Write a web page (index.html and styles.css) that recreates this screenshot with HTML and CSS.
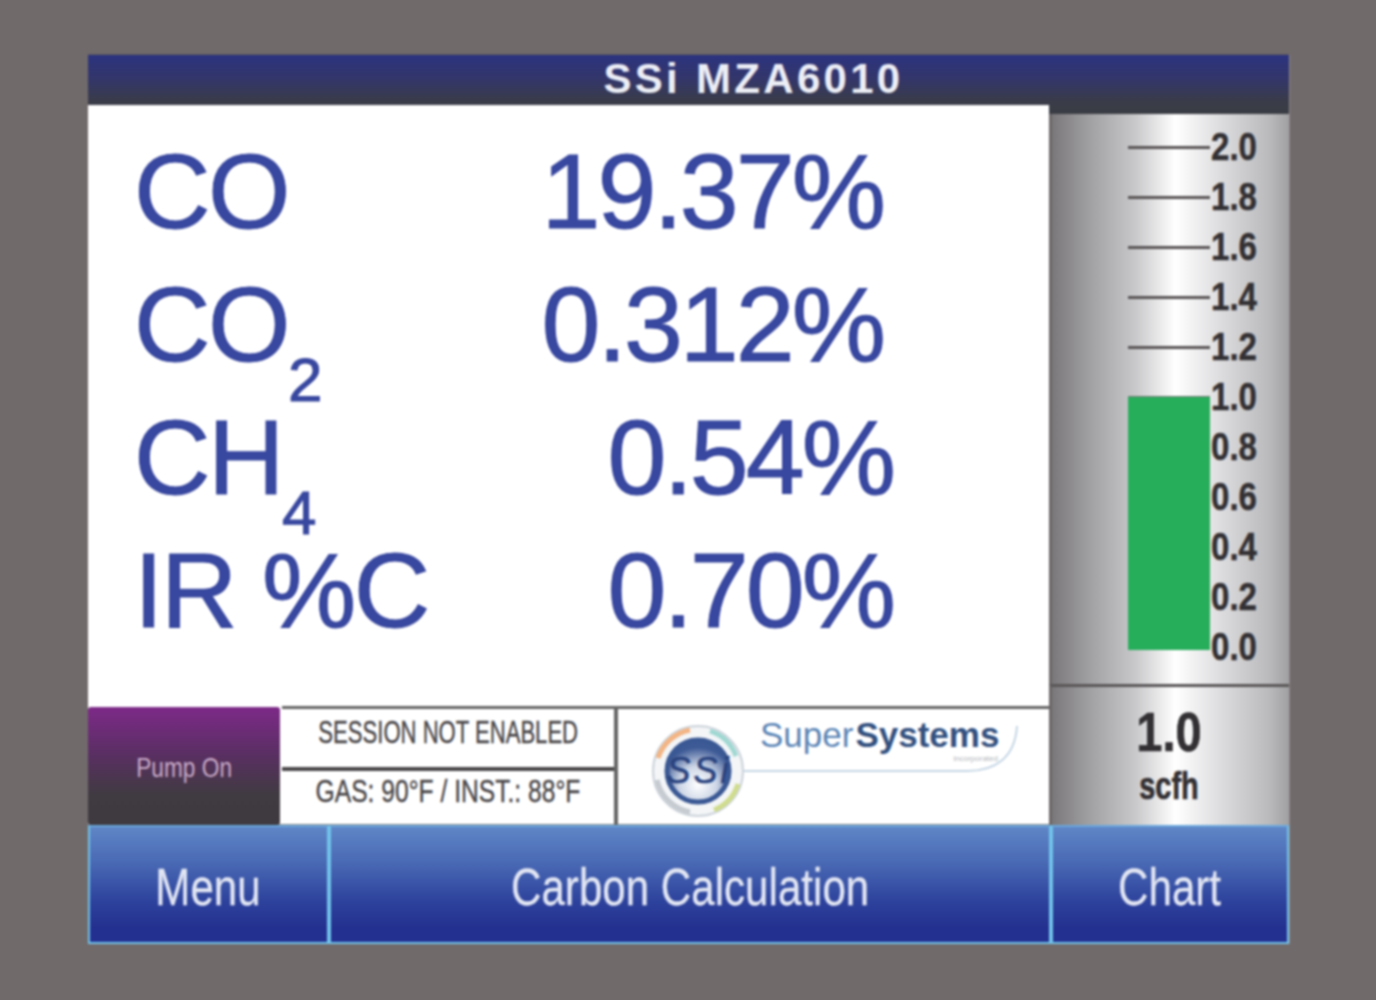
FILE: index.html
```html
<!DOCTYPE html>
<html lang="en">
<head>
<meta charset="utf-8">
<title>SSi MZA6010</title>
<link rel="stylesheet" href="styles.css">
</head>
<body>
<div class="screen">
  <header class="title"><span class="title-text">SSi MZA6010</span></header>
  <main class="readings">
    <div class="row"><div class="gas">CO</div><div class="value">19.37%</div></div>
    <div class="row"><div class="gas">CO<sub class="sub">2</sub></div><div class="value">0.312%</div></div>
    <div class="row"><div class="gas">CH<sub class="sub">4</sub></div><div class="value wide">0.54%</div></div>
    <div class="row"><div class="gas">IR %C</div><div class="value wide">0.70%</div></div>
  </main>
  <aside class="gauge">
    <div class="track">
      <div class="tick"></div><div class="tick"></div><div class="tick"></div><div class="tick"></div><div class="tick"></div>
      <div class="bar"></div>
    </div>
    <div class="scale">
      <div>2.0</div><div>1.8</div><div>1.6</div><div>1.4</div><div>1.2</div><div>1.0</div><div>0.8</div><div>0.6</div><div>0.4</div><div>0.2</div><div>0.0</div>
    </div>
  </aside>
  <div class="flow">
    <div class="flow-value">1.0</div>
    <div class="flow-unit">scfh</div>
  </div>
  <section class="status">
    <div class="pump"><span class="squeeze">Pump On</span></div>
    <div class="messages">
      <div class="message"><span class="squeeze-session">SESSION NOT ENABLED</span></div>
      <div class="message"><span class="squeeze-gas">GAS: 90°F / INST.: 88°F</span></div>
    </div>
    <div class="logo">
      <svg class="logo-art" viewBox="0 0 430 116" width="430" height="116">
        <path d="M123 63H349C377 63 397 50 399 18" fill="none" stroke="#c5d6e4" stroke-width="2"/>
        <circle cx="80" cy="63" r="45" fill="#f3f5f7" stroke="#cdd4dc" stroke-width="2"/>
        <path d="M40 50A42 42 0 0 1 72 22" fill="none" stroke="#f3b585" stroke-width="5"/>
        <path d="M92 23A42 42 0 0 1 118 48" fill="none" stroke="#a0d8d2" stroke-width="5"/>
        <path d="M120 76A42 42 0 0 1 96 102" fill="none" stroke="#d0dc8e" stroke-width="5"/>
        <path d="M72 104A42 42 0 0 1 39 72" fill="none" stroke="#c6cbd1" stroke-width="5"/>
        <defs>
          <radialGradient id="core" cx="50%" cy="72%" r="60%">
            <stop offset="0" stop-color="#ffffff"/>
            <stop offset=".5" stop-color="#cdd6e6"/>
            <stop offset="1" stop-color="#3d5a96"/>
          </radialGradient>
        </defs>
        <circle cx="80" cy="63" r="31" fill="url(#core)" stroke="#3a5894" stroke-width="5"/>
        <text x="81" y="75" class="logo-ssi" text-anchor="middle">SSi</text>
        <text x="142" y="39" class="logo-name">Super<tspan class="logo-bold" dx="2">Systems</tspan></text>
        <text x="380" y="53" class="logo-inc" text-anchor="end">incorporated</text>
      </svg>
    </div>
  </section>
  <nav class="buttons">
    <div class="button"><span class="squeeze">Menu</span></div>
    <div class="button"><span class="squeeze">Carbon Calculation</span></div>
    <div class="button"><span class="squeeze">Chart</span></div>
  </nav>
</div>
</body>
</html>
```

FILE: styles.css
```css
html, body {
  margin: 0;
  height: 100%;
}
body {
  width: 1376px;
  height: 1000px;
  overflow: hidden;
  padding: 55px 0 0 88px;
  box-sizing: border-box;
  background: #716a6b;
  font-family: "Liberation Sans", Arial, sans-serif;
}
.screen {
  display: grid;
  width: 1201px;
  height: 889px;
  grid-template-columns: 961px 240px;
  grid-template-rows: 50px 9px 570px 22px 119px 119px;
  box-shadow: 1px 0 0 #8d8788, 0 -1px 0 #5e5a5c;
  filter: blur(0.9px);
}
.squeeze {
  display: inline-block;
  white-space: nowrap;
  transform: scaleX(0.81);
}
.squeeze-session {
  display: inline-block;
  white-space: nowrap;
  transform: scaleX(0.69);
}
.squeeze-gas {
  display: inline-block;
  white-space: nowrap;
  transform: scaleX(0.77);
}
.title {
  grid-column: 1 / 3;
  grid-row: 1 / 3;
  background: linear-gradient(#2c337f 0%, #33366a 40%, #3a3c48 80%, #3a3c44 100%);
  color: #eceef5;
  text-align: center;
  font-weight: 700;
  font-size: 42px;
  line-height: 47px;
  letter-spacing: 3.3px;
}
.title-text {
  display: inline-block;
  margin-left: 130px;
}
.readings {
  grid-column: 1;
  grid-row: 2 / 5;
  z-index: 1;
  background: #fff;
  color: #38479f;
  padding: 20px 0 0 46px;
}
.row {
  display: grid;
  grid-template-columns: 400px 349px;
  height: 133px;
  font-size: 106px;
  line-height: 133px;
  -webkit-text-stroke: 1px #38479f;
}
.gas {
  white-space: nowrap;
  letter-spacing: -2.5px;
}
.sub {
  font-size: 62px;
  line-height: 0;
  letter-spacing: 0;
  vertical-align: -40px;
}
.value {
  text-align: right;
  white-space: nowrap;
  letter-spacing: -3px;
}
.value.wide {
  margin-right: -10px;
}
.gauge {
  grid-column: 2;
  grid-row: 3;
  display: flex;
  box-sizing: border-box;
  padding: 8px 0 0 76px;
  border-left: 3px solid #6b6768;
  background: linear-gradient(90deg, #7b787b 0%, #a5a5a8 18%, #c8c8ca 35%, #fff 52%, #e2e2e4 68%, #b9b9bb 92%, #a0a0a2 100%);
}
.track {
  width: 82px;
}
.tick {
  height: 50px;
  display: flex;
  align-items: center;
}
.tick::before {
  content: "";
  flex: 1;
  height: 3px;
  background: #5a5556;
}
.bar {
  height: 253px;
  margin-top: 25px;
  background: #27ae5b;
  box-shadow: 0 -1px 0 #777;
}
.scale {
  margin-left: 1px;
  font-weight: 700;
  font-size: 38px;
  line-height: 50px;
  color: #333033;
  height: 550px;
  -webkit-text-stroke: 0.5px #333033;
}
.scale div {
  height: 50px;
  transform: scaleX(0.87);
  transform-origin: left center;
}
.flow {
  grid-column: 2;
  grid-row: 4 / 6;
  box-sizing: border-box;
  padding: 15px 3px 0 0;
  border-top: 3px solid #5b5758;
  border-left: 3px solid #6b6768;
  text-align: center;
  font-weight: 700;
  color: #333033;
  background: linear-gradient(90deg, #7b787b 0%, #a5a5a8 18%, #c8c8ca 35%, #fff 52%, #e2e2e4 68%, #b9b9bb 92%, #a0a0a2 100%);
  -webkit-text-stroke: 0.7px #333033;
}
.flow-value {
  font-size: 56px;
  line-height: 60px;
  transform: scaleX(0.84);
}
.flow-unit {
  font-size: 38px;
  line-height: 48px;
  transform: scaleX(0.76);
}
.status {
  grid-column: 1;
  grid-row: 5;
  z-index: 1;
  display: grid;
  grid-template-columns: 192px 338px 1fr;
  grid-template-rows: 119px;
  border-bottom: 1px solid #888;
  box-sizing: border-box;
  background: #fff;
}
.pump {
  margin-top: 1px;
  border-radius: 3px;
  background: linear-gradient(#7d2a88 0%, #5a2f63 40%, #403b41 75%, #3e3a3f 100%);
  color: #c9aac8;
  font-size: 28px;
  display: flex;
  align-items: center;
  justify-content: center;
  padding-top: 3px;
}
.messages {
  display: grid;
  grid-template-rows: 58px 1fr;
  margin-left: 2px;
  border-top: 3px solid #666;
  border-right: 4px solid #666;
  box-sizing: border-box;
}
.message {
  display: flex;
  align-items: center;
  justify-content: center;
  color: #4a4749;
  font-size: 32px;
  min-width: 0;
  padding-bottom: 12px;
  -webkit-text-stroke: 0.4px #4a4749;
}
.message + .message {
  border-top: 4px solid #4a4749;
  padding-bottom: 13px;
}
.logo {
  border-top: 3px solid #666;
  overflow: hidden;
}
.logo-art {
  display: block;
  margin-top: -1px;
}
.logo-ssi {
  font-family: "Liberation Sans", sans-serif;
  font-size: 36px;
  font-style: italic;
  fill: #2a437f;
  letter-spacing: 3px;
  stroke: #2a437f;
  stroke-width: 0.6px;
}
.logo-name {
  font-family: "Liberation Sans", sans-serif;
  font-size: 35px;
  fill: #5c86b6;
}
.logo-bold {
  font-weight: 700;
  fill: #33517f;
}
.logo-inc {
  font-family: "Liberation Sans", sans-serif;
  font-size: 8px;
  fill: #b2b7bc;
}
.buttons {
  grid-column: 1 / 3;
  grid-row: 6;
  z-index: 1;
  display: grid;
  grid-template-columns: 241px 722px 238px;
}
.button {
  display: flex;
  align-items: center;
  justify-content: center;
  box-sizing: border-box;
  border: 2px solid #72c3ea;
  border-top-color: #6aa6dc;
  background: linear-gradient(#5f86c6 0%, #4a6ab5 30%, #2d429c 65%, #24308f 88%, #23308f 100%);
  color: #e2e6f3;
  font-size: 52px;
  padding-top: 4px;
  -webkit-text-stroke: 0.3px #e2e6f3;
}
```
